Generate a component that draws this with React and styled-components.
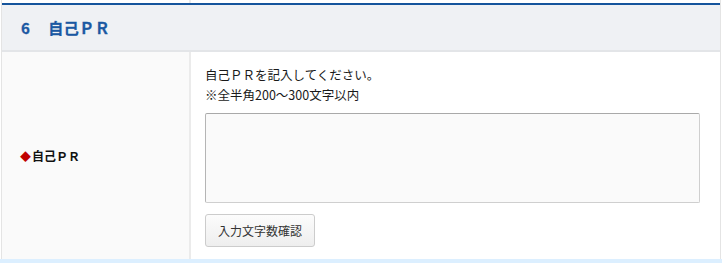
import React from 'react'
import styled, { createGlobalStyle } from 'styled-components'

const GlobalStyle = createGlobalStyle`
  body {
    margin: 0;
    background: #fff;
    font-family: "Noto Sans CJK JP", "Noto Sans", sans-serif;
    color: #222;
  }
`

const Page = styled.div`
  width: 718px;
  margin: 0 2px 0 1px;
  border-left: 1px solid #e4e4e4;
  border-right: 1px solid #e4e4e4;
`

const PrevRow = styled.div`
  height: 3px;
  display: grid;
  grid-template-columns: 189px 1fr;
  div:first-child {
    border-right: 2px solid #ebebeb;
  }
`

const SectionHead = styled.h2`
  margin: 0;
  height: 45px;
  display: flex;
  align-items: center;
  padding-left: 19px;
  background: #eff1f4;
  border-top: 2px solid #15549c;
  border-bottom: 2px solid #e3e5e8;
  color: #1a58a2;
  font-size: 15px;
  font-weight: 700;
  letter-spacing: 0.5px;
  -webkit-text-stroke: 0.3px #1a58a2;
  .num {
    margin-right: 18px;
  }
`

const Row = styled.div`
  display: grid;
  grid-template-columns: 189px 1fr;
`

const Label = styled.div`
  background: #fafafa;
  border-right: 2px solid #ebebeb;
  display: flex;
  align-items: center;
  padding-left: 18px;
  font-size: 12px;
  font-weight: bold;
  color: #111;
  .mark {
    color: #c00000;
    font-size: 11px;
    margin-right: 1px;
  }
`

const Field = styled.div`
  padding: 13px 17px 12px 14px;
  display: flex;
  flex-direction: column;
  align-items: flex-start;
`

const Note = styled.p`
  margin: 0;
  font-size: 12.5px;
  line-height: 20px;
  color: #1a1a1a;
`

const TextBox = styled.textarea`
  box-sizing: border-box;
  width: 495px;
  height: 90px;
  margin-top: 8px;
  background: #fafafa;
  border: 1px solid;
  border-color: #a9a9a9 #cfcfcf #cfcfcf #b5b5b5;
  border-radius: 2px;
  resize: none;
`

const Button = styled.button`
  margin-top: 11px;
  height: 33px;
  width: 110px;
  padding: 0;
  background: linear-gradient(#fcfcfc, #eeeeee);
  border: 1px solid #cccccc;
  border-radius: 3px;
  font-family: inherit;
  font-size: 12px;
  color: #333;
`

const NextEdge = styled.div`
  height: 4px;
  background: #dcefff;
`

export default function App() {
  return (
    <>
      <GlobalStyle />
      <Page>
        <PrevRow><div /><div /></PrevRow>
        <SectionHead>
          <span className="num">6</span>
          <span>自己ＰＲ</span>
        </SectionHead>
        <Row>
          <Label>
            <span className="mark">◆</span>自己ＰＲ
          </Label>
          <Field>
            <Note>自己ＰＲを記入してください。</Note>
            <Note>※全半角200〜300文字以内</Note>
            <TextBox />
            <Button type="button">入力文字数確認</Button>
          </Field>
        </Row>
      </Page>
      <NextEdge />
    </>
  )
}
